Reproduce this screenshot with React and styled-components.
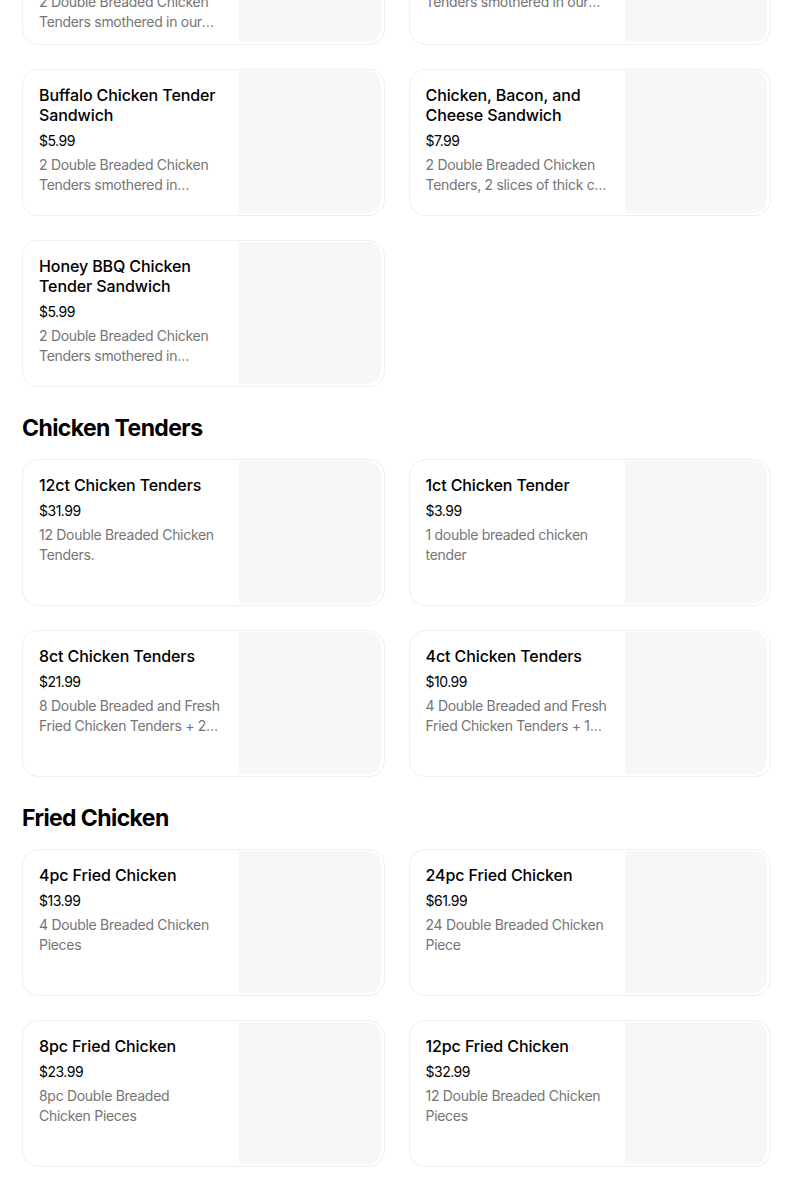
import React from 'react'
import styled, { createGlobalStyle } from 'styled-components';

const GlobalStyle = createGlobalStyle`
  html, body {
    margin: 0;
    padding: 0;
    background: #ffffff;
    overflow: hidden;
  }
  body {
    font-family: Inter, "Noto Sans", sans-serif;
    color: #000000;
  }
`;

const Page = styled.div`
  width: 749px;
  margin: -114px 0 0 22px;
  display: flex;
  flex-direction: column;
`;

const Section = styled.section`
  display: flex;
  flex-direction: column;
`;

const Heading = styled.h2`
  margin: 25px 0 15px;
  font-size: 23px;
  line-height: 32px;
  font-weight: 700;
  letter-spacing: -0.6px;
`;

const Grid = styled.div`
  display: grid;
  grid-template-columns: 1fr 1fr;
  gap: 24px;
`;

const Card = styled.div`
  display: flex;
  min-height: 147px;
  box-sizing: border-box;
  border: 1px solid #efefef;
  border-radius: 16px;
  background: #fff;
  overflow: hidden;
`;

const Info = styled.div`
  flex: 1;
  min-width: 0;
  padding: 15px 16px 12px;
`;

const Title = styled.div`
  font-size: 16px;
  line-height: 20px;
  font-weight: 500;
  color: #000;
  letter-spacing: -0.1px;
`;

const Price = styled.div`
  margin-top: 6px;
  font-size: 14px;
  line-height: 20px;
  color: #000;
  letter-spacing: -0.5px;
`;

const Desc = styled.div`
  margin-top: 4px;
  font-size: 14px;
  line-height: 20px;
  color: #757575;
  letter-spacing: -0.3px;
  display: -webkit-box;
  -webkit-line-clamp: 2;
  -webkit-box-orient: vertical;
  overflow: hidden;
`;

const Thumb = styled.div`
  width: 142px;
  flex-shrink: 0;
  margin: 1px 3px 2px 0;
  background: #f7f7f7;
  border-radius: 0 14px 14px 0;
`;

const Item = ({ title, price, desc }) => (
  <Card>
    <Info>
      <Title>{title}</Title>
      <Price>{price}</Price>
      <Desc>{desc}</Desc>
    </Info>
    <Thumb />
  </Card>
);

const sandwiches = [
  { title: 'Spicy Nashville Hot Chicken Tender Sandwich', price: '$5.99', desc: '2 Double Breaded Chicken Tenders smothered in our signature hot sauce' },
  { title: 'Classic Chicken Tender Sandwich', price: '$5.99', desc: '2 Double Breaded Chicken Tenders smothered in our signature sauce' },
  { title: 'Buffalo Chicken Tender Sandwich', price: '$5.99', desc: '2 Double Breaded Chicken Tenders smothered in buffalo sauce' },
  { title: 'Chicken, Bacon, and Cheese Sandwich', price: '$7.99', desc: '2 Double Breaded Chicken Tenders, 2 slices of thick cut bacon and cheese' },
  { title: 'Honey BBQ Chicken Tender Sandwich', price: '$5.99', desc: '2 Double Breaded Chicken Tenders smothered in delicious honey BBQ sauce' },
];

const tenders = [
  { title: '12ct Chicken Tenders', price: '$31.99', desc: '12 Double Breaded Chicken Tenders.' },
  { title: '1ct Chicken Tender', price: '$3.99', desc: '1 double breaded chicken tender' },
  { title: '8ct Chicken Tenders', price: '$21.99', desc: '8 Double Breaded and Fresh Fried Chicken Tenders + 2 dipping sauces' },
  { title: '4ct Chicken Tenders', price: '$10.99', desc: '4 Double Breaded and Fresh Fried Chicken Tenders + 1 dipping sauce' },
];

const fried = [
  { title: '4pc Fried Chicken', price: '$13.99', desc: '4 Double Breaded Chicken Pieces' },
  { title: '24pc Fried Chicken', price: '$61.99', desc: '24 Double Breaded Chicken Piece' },
  { title: '8pc Fried Chicken', price: '$23.99', desc: '8pc Double Breaded Chicken Pieces' },
  { title: '12pc Fried Chicken', price: '$32.99', desc: '12 Double Breaded Chicken Pieces' },
];

const App = () => {
  return (
    <>
      <GlobalStyle />
      <Page>
        <Section>
          <Grid>
            {sandwiches.map((it) => <Item key={it.title} {...it} />)}
          </Grid>
        </Section>
        <Section>
          <Heading>Chicken Tenders</Heading>
          <Grid>
            {tenders.map((it) => <Item key={it.title} {...it} />)}
          </Grid>
        </Section>
        <Section>
          <Heading>Fried Chicken</Heading>
          <Grid>
            {fried.map((it) => <Item key={it.title} {...it} />)}
          </Grid>
        </Section>
      </Page>
    </>
  )
}

export default App
